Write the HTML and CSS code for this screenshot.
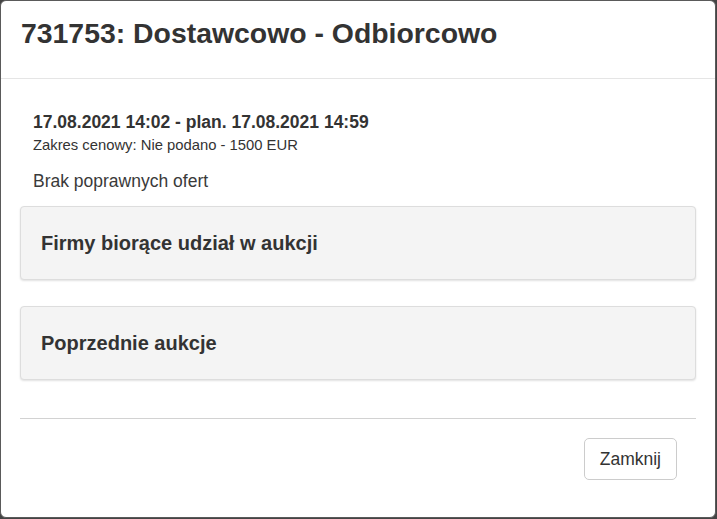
FILE: index.html
```html
<!DOCTYPE html>
<html lang="pl">
<head>
<meta charset="utf-8">
<title>731753: Dostawcowo - Odbiorcowo</title>
<link rel="stylesheet" href="styles.css">
</head>
<body>
<div class="modal">
  <div class="modal-header">
    <h4 class="modal-title">731753: Dostawcowo - Odbiorcowo</h4>
  </div>
  <div class="modal-body">
    <div class="info">
      <div class="dates">17.08.2021 14:02 - plan. 17.08.2021 14:59</div>
      <div class="range">Zakres cenowy: Nie podano - 1500 EUR</div>
      <div class="offers">Brak poprawnych ofert</div>
    </div>
    <div class="panel"><h4 class="panel-title">Firmy biorące udział w aukcji</h4></div>
    <div class="panel"><h4 class="panel-title">Poprzednie aukcje</h4></div>
    <hr class="divider">
    <div class="footer">
      <button class="btn" type="button">Zamknij</button>
    </div>
  </div>
</div>
</body>
</html>
```

FILE: styles.css
```css
* { box-sizing: border-box; }
html, body {
  margin: 0;
  padding: 0;
}
body {
  background: #444444;
  font-family: "Liberation Sans", Arial, Helvetica, sans-serif;
  color: #333333;
  width: 717px;
  height: 519px;
  overflow: hidden;
}
.modal {
  width: 716px;
  height: 518px;
  background: #ffffff;
  border: 1px solid #5a5a5a;
  border-radius: 6px;
  display: flex;
  flex-direction: column;
}
.modal-header {
  height: 78px;
  padding: 17px 20px 0;
  border-bottom: 1px solid #e5e5e5;
}
.modal-title {
  margin: 0;
  font-size: 28.4px;
  line-height: 31px;
  font-weight: bold;
  color: #333333;
}
.modal-body {
  padding: 0 19px;
  display: flex;
  flex-direction: column;
}
.info {
  padding: 31px 13px 0;
}
.dates {
  font-size: 17.5px;
  font-weight: bold;
  line-height: 25px;
}
.range {
  font-size: 14.8px;
  line-height: 21px;
}
.offers {
  font-size: 17.5px;
  line-height: 25px;
  margin-top: 13px;
  color: #3a3a3a;
}
.panel {
  margin-top: 12px;
  height: 74px;
  background: #f4f4f4;
  border: 1px solid #dddddd;
  border-radius: 4px;
  box-shadow: 0 1px 2px rgba(0, 0, 0, 0.12);
  display: flex;
  align-items: center;
  padding: 0 20px;
}
.panel + .panel {
  margin-top: 26px;
}
.panel-title {
  margin: 0;
  font-size: 20px;
  line-height: 24px;
  font-weight: bold;
  color: #333333;
}
.divider {
  margin: 38px 0 0;
  border: 0;
  border-top: 1px solid #d2d2d2;
  height: 0;
}
.footer {
  display: flex;
  justify-content: flex-end;
  padding: 19px 19px 0 0;
}
.btn {
  font-family: "Liberation Sans", Arial, Helvetica, sans-serif;
  font-size: 17.5px;
  line-height: 25px;
  padding: 7.5px 15px;
  height: 42px;
  background: #ffffff;
  color: #333333;
  border: 1px solid #cccccc;
  border-radius: 5px;
}
```
